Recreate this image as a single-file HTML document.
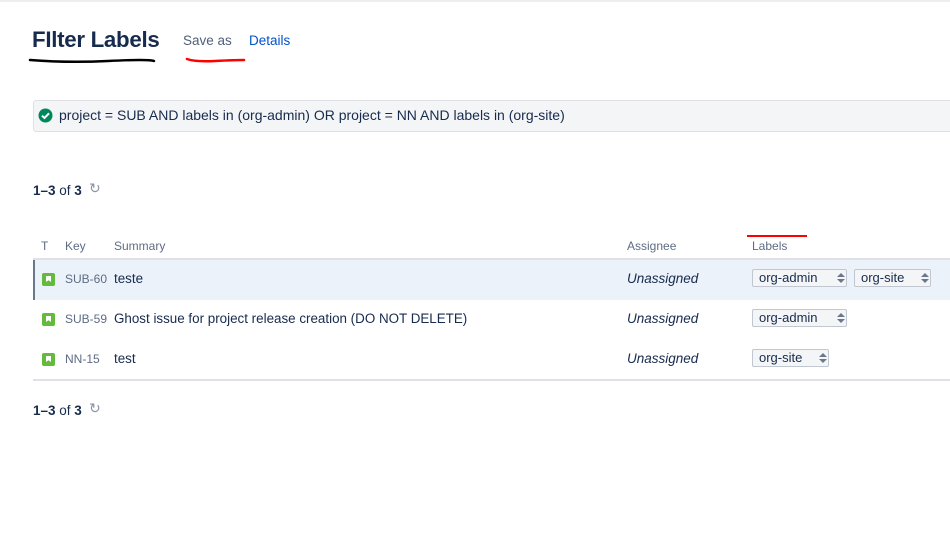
<!DOCTYPE html>
<html><head><style>
*{margin:0;padding:0;box-sizing:border-box}
body{width:950px;height:549px;background:#fff;font-family:"Liberation Sans",sans-serif;color:#172b4d;position:relative;overflow:hidden}
.a{position:absolute;white-space:nowrap}
.row{position:absolute;left:33px;width:917px;height:40px}
.lbl{position:absolute;height:18px;border:1px solid #c1c7d0;border-radius:2px;background:#f4f5f7;font-size:13px;line-height:16px;padding-left:6px;color:#172b4d}
.lbl i{position:absolute;right:5px;top:3px;width:0;height:0}
.lbl i:before{content:"";position:absolute;left:-4px;top:0;border:4px solid transparent;border-bottom:4px solid #6b778c;border-top:none}
.lbl i:after{content:"";position:absolute;left:-4px;top:6px;border:4px solid transparent;border-top:4px solid #6b778c;border-bottom:none}
.ico{position:absolute;left:9px;top:13px;width:13px;height:13px;background:#63ba3c;border-radius:2px}
.ico:after{content:"";position:absolute;left:4px;top:3px;width:5px;height:6px;background:#fff;clip-path:polygon(0 0,100% 0,100% 100%,50% 70%,0 100%)}
.key{position:absolute;left:32px;top:12px;font-size:12px;color:#5e6c84}
.sum{position:absolute;left:81px;top:11px;font-size:13.4px;color:#172b4d}
.asg{position:absolute;left:594px;top:11px;font-size:13.5px;font-style:italic;color:#172b4d}
</style></head><body>
<div class="a" style="left:0;top:0;width:950px;height:2px;background:#eee"></div>
<div class="a" style="left:32px;top:27px;font-size:22.3px;font-weight:bold;color:#172b4d;letter-spacing:-0.3px">FIlter Labels</div>
<svg class="a" style="left:28px;top:56px" width="130" height="8"><path d="M2 4 Q40 7 80 5 T126 5" stroke="#000" stroke-width="2.5" fill="none" stroke-linecap="round"/></svg>
<div class="a" style="left:183px;top:33px;font-size:13.5px;color:#505f79">Save as</div>
<svg class="a" style="left:185px;top:56px" width="62" height="8"><path d="M2 3 Q10 6 30 5 T59 4" stroke="#f00" stroke-width="2.5" fill="none" stroke-linecap="round"/></svg>
<div class="a" style="left:249px;top:33px;font-size:13.5px;color:#0052cc">Details</div>
<div class="a" style="left:33px;top:100px;width:930px;height:32px;background:#f4f5f7;border:1px solid #dfe1e6;border-radius:3px"></div>
<svg class="a" style="left:38px;top:108px" width="15" height="15"><circle cx="7.5" cy="7.5" r="7" fill="#00875a"/><path d="M4 7.7 L6.5 10 L11 5.3" stroke="#fff" stroke-width="2" fill="none"/></svg>
<div class="a" style="left:59px;top:107px;font-size:14px;color:#172b4d">project = SUB AND labels in (org-admin) OR project = NN AND labels in (org-site)</div>
<div class="a" style="left:33px;top:183px;font-size:13.5px"><b>1–3</b> of <b>3</b></div>
<div class="a" style="left:89px;top:180px;font-size:14px;color:#8993a4">↻</div>
<div class="a" style="left:41px;top:239px;font-size:12px;color:#5e6c84">T</div>
<div class="a" style="left:65px;top:239px;font-size:12px;color:#5e6c84">Key</div>
<div class="a" style="left:114px;top:239px;font-size:12px;color:#5e6c84">Summary</div>
<div class="a" style="left:627px;top:239px;font-size:12px;color:#5e6c84">Assignee</div>
<div class="a" style="left:752px;top:239px;font-size:12px;color:#5e6c84">Labels</div>
<div class="a" style="left:747px;top:235px;width:60px;height:2px;background:#f00"></div>
<div class="a" style="left:33px;top:258px;width:917px;height:2px;background:#dfe1e6"></div>
<div class="row" style="top:260px;background:#ebf2fa;border-left:2px solid #6b778c">
<div class="ico" style="left:7px"></div><div class="key" style="left:30px">SUB-60</div><div class="sum" style="left:79px">teste</div><div class="asg" style="left:592px">Unassigned</div>
<div class="lbl" style="left:717px;top:9px;width:95px">org-admin<i></i></div>
<div class="lbl" style="left:819px;top:9px;width:77px">org-site<i></i></div>
</div>
<div class="row" style="top:300px">
<div class="ico"></div><div class="key">SUB-59</div><div class="sum">Ghost issue for project release creation (DO NOT DELETE)</div><div class="asg">Unassigned</div>
<div class="lbl" style="left:719px;top:9px;width:95px">org-admin<i></i></div>
</div>
<div class="row" style="top:340px">
<div class="ico"></div><div class="key">NN-15</div><div class="sum">test</div><div class="asg">Unassigned</div>
<div class="lbl" style="left:719px;top:9px;width:77px">org-site<i></i></div>
</div>
<div class="a" style="left:33px;top:379px;width:917px;height:2px;background:#dfe1e6"></div>
<div class="a" style="left:33px;top:403px;font-size:13.5px"><b>1–3</b> of <b>3</b></div>
<div class="a" style="left:89px;top:400px;font-size:14px;color:#8993a4">↻</div>
</body></html>
